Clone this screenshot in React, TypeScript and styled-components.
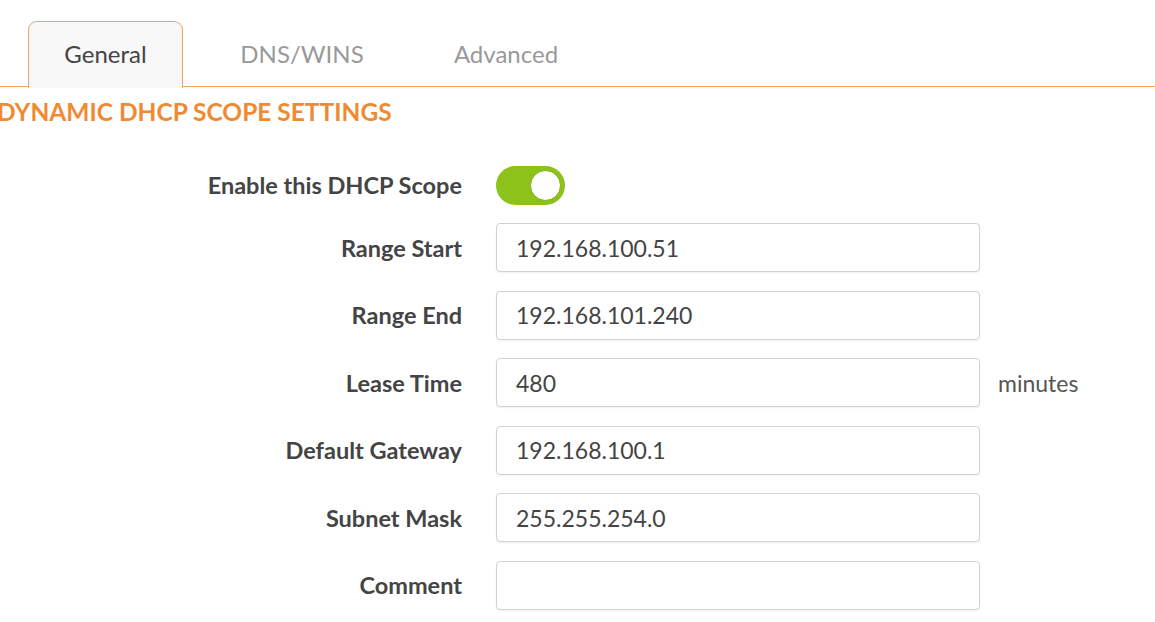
import React from 'react';
import styled, { createGlobalStyle } from 'styled-components';

const GlobalStyle = createGlobalStyle`
  html, body {
    margin: 0;
    padding: 0;
    background: #ffffff;
    font-family: 'Lato', 'Noto Sans', sans-serif;
  }
`;

const Page = styled.div`
  width: 1155px;
  height: 622px;
  overflow: hidden;
  background: #fff;
`;

const TabBar = styled.div`
  display: flex;
  align-items: flex-end;
  gap: 34px;
  height: 87px;
  padding-left: 28px;
  border-bottom: 1.5px solid #f0a35e;
  box-sizing: border-box;
`;

const Tab = styled.div<{ $active?: boolean }>`
  width: ${(p) => (p.$active ? '155px' : '170px')};
  height: 67px;
  box-sizing: border-box;
  display: flex;
  align-items: center;
  justify-content: center;
  padding-bottom: 2px;
  font-size: 24px;
  color: ${(p) => (p.$active ? '#444' : '#999')};
  background: ${(p) => (p.$active ? '#f8f8f8' : 'transparent')};
  border: ${(p) => (p.$active ? '1.5px solid #f0a35e' : '1.5px solid transparent')};
  border-bottom: none;
  border-radius: 9px 9px 0 0;
  margin-bottom: -1.5px;
`;

const Heading = styled.h2`
  margin: 0;
  padding: 12px 0 0 0;
  margin-left: -3px;
  font-size: 24.5px;
  font-weight: 700;
  color: #f08a32;
  line-height: 26px;
  white-space: nowrap;
`;

const Form = styled.div`
  display: grid;
  grid-template-columns: 462px 484px auto;
  column-gap: 34px;
  row-gap: 18.5px;
  align-items: center;
  padding-top: 41px;
`;

const Label = styled.label`
  text-align: right;
  font-size: 23.5px;
  font-weight: 700;
  color: #444;
  white-space: nowrap;
`;

const Field = styled.div`
  height: 49px;
  box-sizing: border-box;
  border: 1.5px solid #d2d2d2;
  border-radius: 4px;
  box-shadow: 0 1px 2px rgba(0, 0, 0, 0.06);
  display: flex;
  align-items: center;
  padding-left: 19px;
  font-size: 23px;
  color: #444;
  background: #fff;
`;

const Unit = styled.span`
  margin-left: -16px;
  font-size: 23px;
  color: #555;
`;

const ToggleCell = styled.div`
  height: 39px;
  display: flex;
  align-items: center;
  margin-bottom: -0.5px;
`;

const Toggle = styled.div`
  width: 69px;
  height: 39px;
  border-radius: 20px;
  background: #8cc21a;
  position: relative;
  box-sizing: border-box;
`;

const Knob = styled.div`
  position: absolute;
  top: 4px;
  right: 4px;
  width: 31px;
  height: 31px;
  border-radius: 50%;
  background: #fff;
  box-sizing: border-box;
  border: 1.5px solid #7ab014;
`;

const rows = [
  { label: 'Range Start', value: '192.168.100.51' },
  { label: 'Range End', value: '192.168.101.240' },
  { label: 'Lease Time', value: '480', unit: 'minutes' },
  { label: 'Default Gateway', value: '192.168.100.1' },
  { label: 'Subnet Mask', value: '255.255.254.0' },
  { label: 'Comment', value: '' },
];

const App = () => {
  return (
    <Page>
      <GlobalStyle />
      <TabBar>
        <Tab $active>General</Tab>
        <Tab>DNS/WINS</Tab>
        <Tab>Advanced</Tab>
      </TabBar>
      <Heading>DYNAMIC DHCP SCOPE SETTINGS</Heading>
      <Form>
        <Label>Enable this DHCP Scope</Label>
        <ToggleCell>
          <Toggle>
            <Knob />
          </Toggle>
        </ToggleCell>
        <span />
        {rows.map((r) => (
          <React.Fragment key={r.label}>
            <Label>{r.label}</Label>
            <Field>{r.value}</Field>
            {r.unit ? <Unit>{r.unit}</Unit> : <span />}
          </React.Fragment>
        ))}
      </Form>
    </Page>
  );
};

export default App;
